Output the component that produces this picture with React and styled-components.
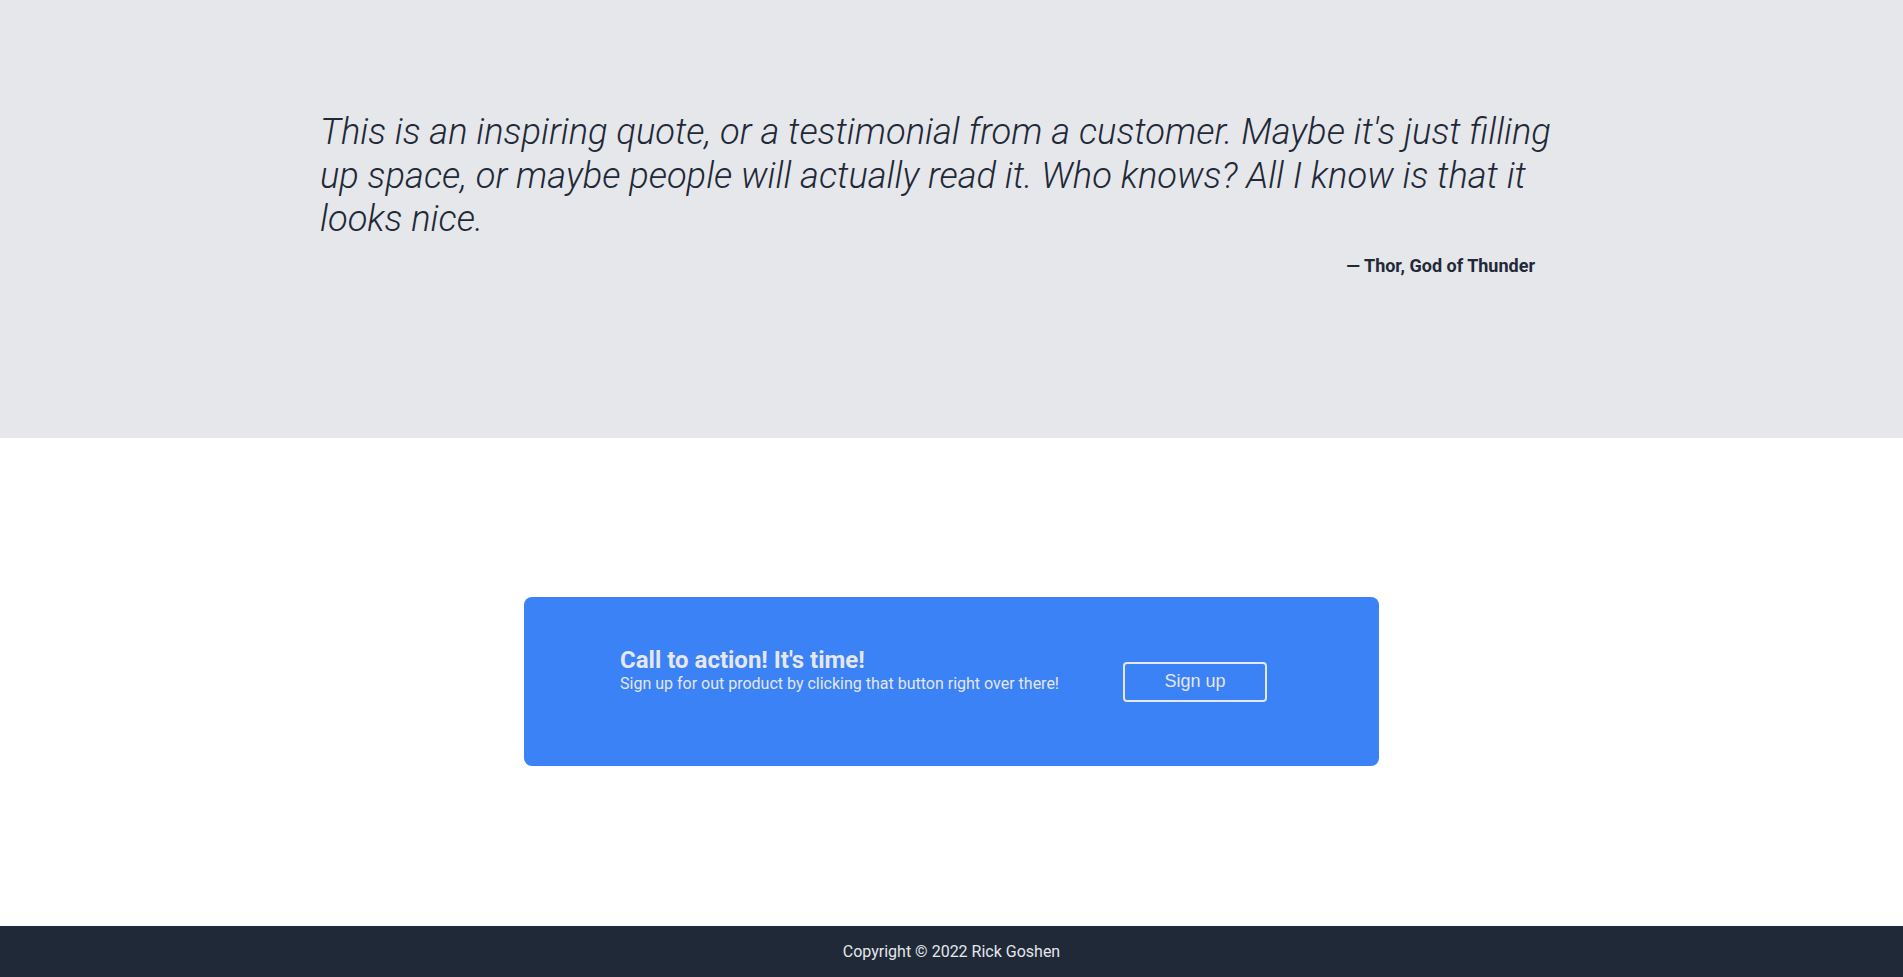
import React from "react";
import styled, { createGlobalStyle } from "styled-components";

const Global = createGlobalStyle`
  html, body { margin: 0; padding: 0; }
  body { font-family: Roboto, "Noto Sans", sans-serif; background: #ffffff; }
  * { box-sizing: border-box; }
`;

const QuoteSection = styled.section`
  background: #e5e7eb;
  height: 438px;
  padding: 110px 320px 0;
  color: #1f2937;
`;

const Quote = styled.blockquote`
  margin: 0;
  font-family: Roboto, sans-serif;
  font-style: italic;
  font-weight: 300;
  font-size: 36.3px;
  line-height: 43.7px;
`;

const Attribution = styled.p`
  margin: 11px 48px 0 0;
  text-align: right;
  font-weight: 700;
  font-size: 18px;
  line-height: 28px;
`;

const CtaSection = styled.section`
  display: flex;
  justify-content: center;
  padding: 159px 0 160px;
`;

const CtaBox = styled.div`
  width: 855px;
  height: 169px;
  background: #3b82f6;
  border-radius: 8px;
  padding: 0 96px;
  display: flex;
  align-items: center;
  gap: 64px;
  color: #e5e7eb;
`;

const CtaText = styled.div`
  margin-bottom: 19px;
`;

const CtaTitle = styled.h2`
  margin: 0;
  font-size: 24px;
  line-height: 24px;
  font-weight: 700;
`;

const CtaSub = styled.p`
  margin: 0;
  font-size: 16px;
  line-height: 24px;
`;

const SignUp = styled.button`
  width: 144px;
  height: 40px;
  flex-shrink: 0;
  background: transparent;
  border: 2px solid #e5e7eb;
  border-radius: 4px;
  color: #e5e7eb;
  font-family: "Liberation Sans", Arial, sans-serif;
  font-size: 18px;
  cursor: pointer;
`;

const Footer = styled.footer`
  background: #1f2937;
  color: #e5e7eb;
  text-align: center;
  font-size: 16px;
  line-height: 24px;
  padding: 14px 0 13px;
`;

export default function App() {
  return (
    <>
      <Global />
      <QuoteSection>
        <Quote>
          This is an inspiring quote, or a testimonial from a customer. Maybe
          it's just filling up space, or maybe people will actually read it.
          Who knows? All I know is that it looks nice.
        </Quote>
        <Attribution>— Thor, God of Thunder</Attribution>
      </QuoteSection>
      <CtaSection>
        <CtaBox>
          <CtaText>
            <CtaTitle>Call to action! It's time!</CtaTitle>
            <CtaSub>
              Sign up for out product by clicking that button right over there!
            </CtaSub>
          </CtaText>
          <SignUp>Sign up</SignUp>
        </CtaBox>
      </CtaSection>
      <Footer>Copyright © 2022 Rick Goshen</Footer>
    </>
  );
}
